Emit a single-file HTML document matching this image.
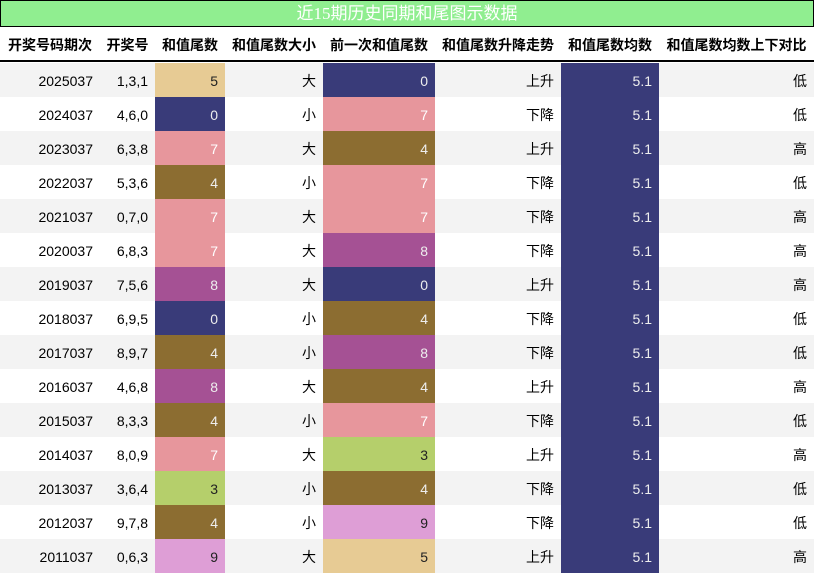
<!DOCTYPE html>
<html><head><meta charset="utf-8"><style>
*{margin:0;padding:0;box-sizing:border-box}
body{width:814px;height:574px;background:#fff;font-family:"Liberation Sans","Noto Sans CJK SC",sans-serif;position:relative;overflow:hidden}
.t{position:absolute;left:0;top:0;width:814px;height:27px;background:#90EE90;border:1px solid #000;color:#fff;font-size:17px;text-align:center;line-height:26px;font-family:"Liberation Serif","Noto Sans CJK SC",serif}
.h{position:absolute;top:27px;height:35px;border-bottom:2px solid #000;width:814px}
.h div{position:absolute;top:0;height:33px;line-height:37px;font-weight:bold;font-size:14px;text-align:center;color:#000}
.r{position:absolute;left:0;width:814px;height:34px}
.r div{position:absolute;top:0;height:34px;line-height:36px;font-size:14px;text-align:right;padding-right:7px;color:#000}
</style></head><body>
<div class="t">近15期历史同期和尾图示数据</div>
<div class="h">
<div style="left:0;width:100px">开奖号码期次</div>
<div style="left:100px;width:55px">开奖号</div>
<div style="left:155px;width:70px">和值尾数</div>
<div style="left:225px;width:98px">和值尾数大小</div>
<div style="left:323px;width:112px">前一次和值尾数</div>
<div style="left:435px;width:126px">和值尾数升降走势</div>
<div style="left:561px;width:98px">和值尾数均数</div>
<div style="left:659px;width:155px">和值尾数均数上下对比</div>
</div>
<div id="rows"></div>
<script>
var C={0:'#393B79',3:'#B5CF6B',4:'#8C6D31',5:'#E7CB94',7:'#E7969C',8:'#A55194',9:'#DE9ED6'};
var F={0:'#eee',3:'#222',4:'#eee',5:'#222',7:'#fff',8:'#eee',9:'#222'};
var d=[["2025037","1,3,1",5,"大",0,"上升","低"],["2024037","4,6,0",0,"小",7,"下降","低"],["2023037","6,3,8",7,"大",4,"上升","高"],["2022037","5,3,6",4,"小",7,"下降","低"],["2021037","0,7,0",7,"大",7,"下降","高"],["2020037","6,8,3",7,"大",8,"下降","高"],["2019037","7,5,6",8,"大",0,"上升","高"],["2018037","6,9,5",0,"小",4,"下降","低"],["2017037","8,9,7",4,"小",8,"下降","低"],["2016037","4,6,8",8,"大",4,"上升","高"],["2015037","8,3,3",4,"小",7,"下降","低"],["2014037","8,0,9",7,"大",3,"上升","高"],["2013037","3,6,4",3,"小",4,"下降","低"],["2012037","9,7,8",4,"小",9,"下降","低"],["2011037","0,6,3",9,"大",5,"上升","高"]];
var h='';
d.forEach(function(r,i){
var bg=i%2==0?'#f3f3f3':'#fff';
h+='<div class="r" style="top:'+(63+i*34)+'px;background:'+bg+'">'+
'<div style="left:0;width:100px">'+r[0]+'</div>'+
'<div style="left:100px;width:55px">'+r[1]+'</div>'+
'<div style="left:155px;width:70px;background:'+C[r[2]]+';color:'+F[r[2]]+'">'+r[2]+'</div>'+
'<div style="left:225px;width:98px">'+r[3]+'</div>'+
'<div style="left:323px;width:112px;background:'+C[r[4]]+';color:'+F[r[4]]+'">'+r[4]+'</div>'+
'<div style="left:435px;width:126px">'+r[5]+'</div>'+
'<div style="left:561px;width:98px;background:#393B79;color:#eee">5.1</div>'+
'<div style="left:659px;width:155px">'+r[6]+'</div></div>';
});
document.getElementById('rows').innerHTML=h;
</script>
</body></html>
